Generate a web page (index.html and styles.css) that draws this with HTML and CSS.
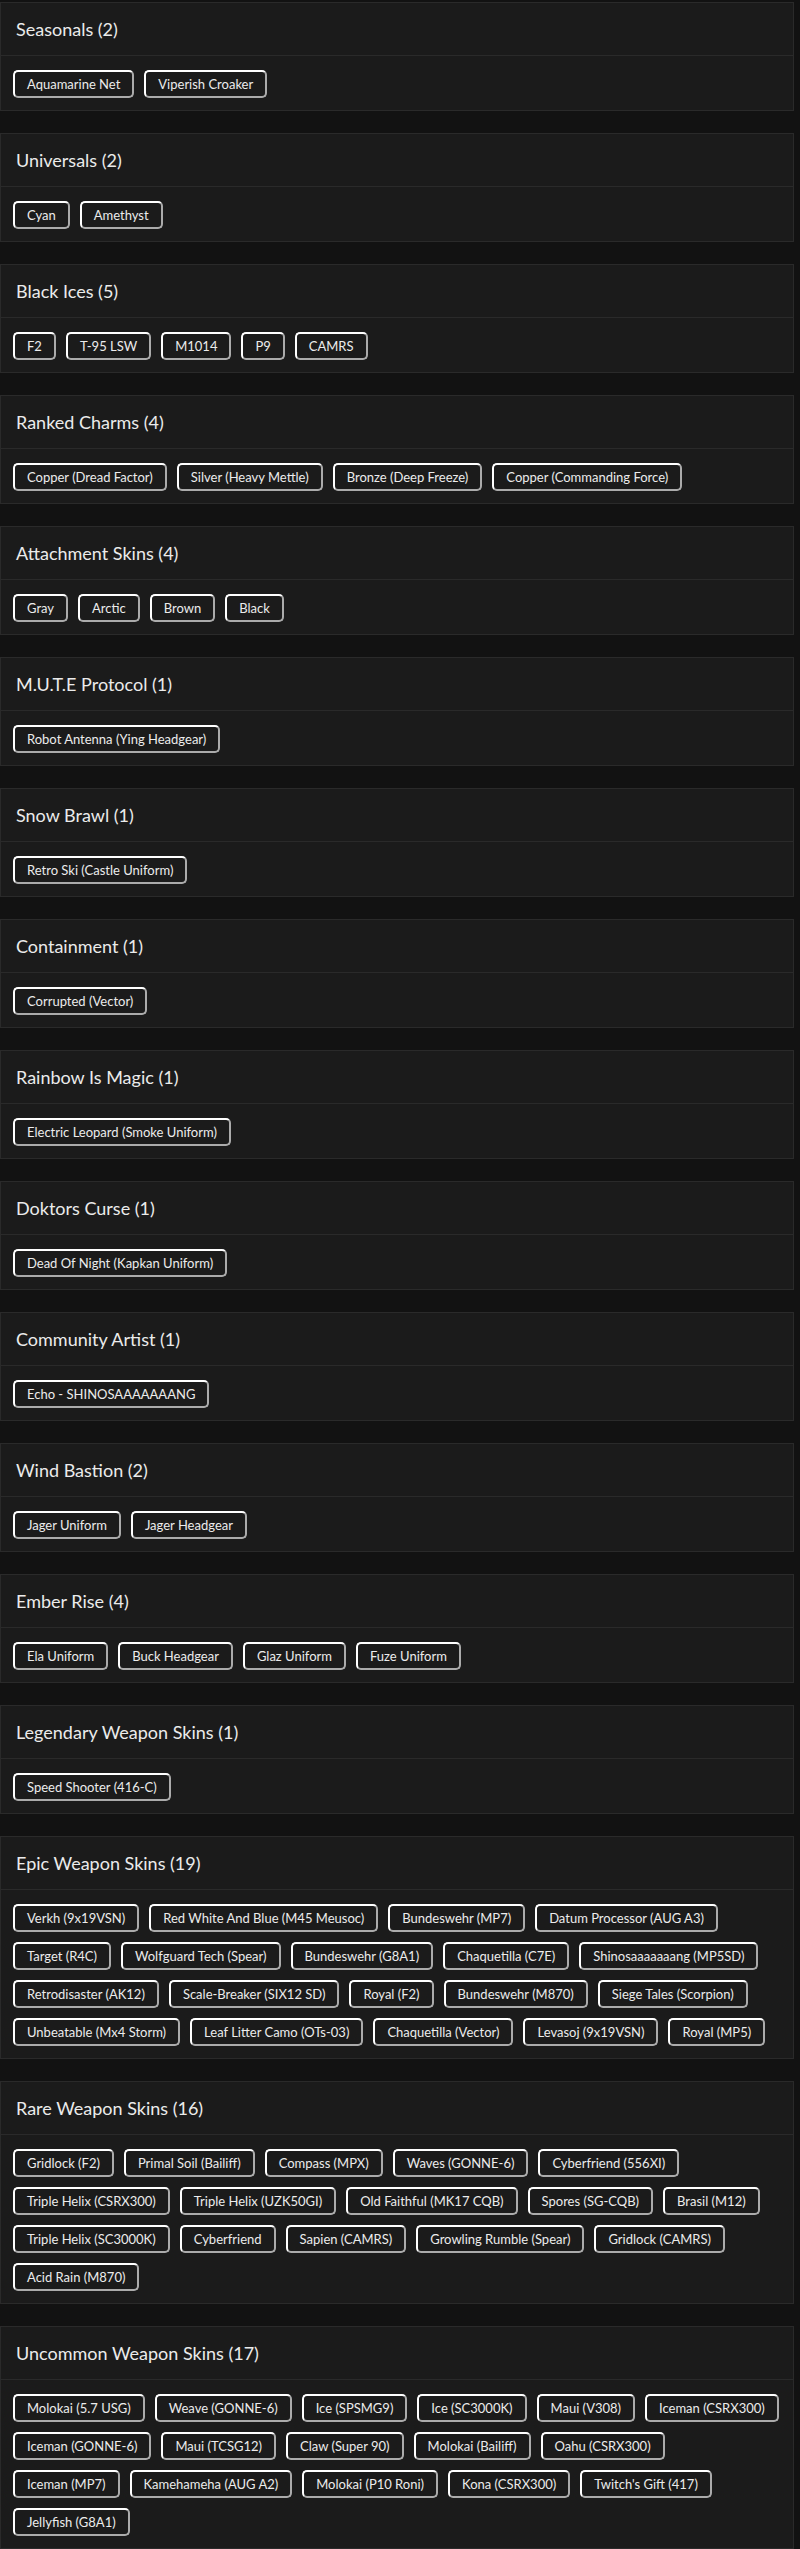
FILE: index.html
```html
<!DOCTYPE html>
<html lang="en">
<head>
<meta charset="utf-8">
<title>Inventory</title>
<link rel="stylesheet" href="styles.css">
</head>
<body>
<main class="page">
  <section class="card">
    <h2 class="card-header">Seasonals (2)</h2>
    <div class="card-body">
      <div class="chip-row">
        <button class="chip">Aquamarine Net</button>
        <button class="chip">Viperish Croaker</button>
      </div>
    </div>
  </section>
  <section class="card">
    <h2 class="card-header">Universals (2)</h2>
    <div class="card-body">
      <div class="chip-row">
        <button class="chip">Cyan</button>
        <button class="chip">Amethyst</button>
      </div>
    </div>
  </section>
  <section class="card">
    <h2 class="card-header">Black Ices (5)</h2>
    <div class="card-body">
      <div class="chip-row">
        <button class="chip">F2</button>
        <button class="chip">T-95 LSW</button>
        <button class="chip">M1014</button>
        <button class="chip">P9</button>
        <button class="chip">CAMRS</button>
      </div>
    </div>
  </section>
  <section class="card">
    <h2 class="card-header">Ranked Charms (4)</h2>
    <div class="card-body">
      <div class="chip-row">
        <button class="chip">Copper (Dread Factor)</button>
        <button class="chip">Silver (Heavy Mettle)</button>
        <button class="chip">Bronze (Deep Freeze)</button>
        <button class="chip">Copper (Commanding Force)</button>
      </div>
    </div>
  </section>
  <section class="card">
    <h2 class="card-header">Attachment Skins (4)</h2>
    <div class="card-body">
      <div class="chip-row">
        <button class="chip">Gray</button>
        <button class="chip">Arctic</button>
        <button class="chip">Brown</button>
        <button class="chip">Black</button>
      </div>
    </div>
  </section>
  <section class="card">
    <h2 class="card-header">M.U.T.E Protocol (1)</h2>
    <div class="card-body">
      <div class="chip-row">
        <button class="chip">Robot Antenna (Ying Headgear)</button>
      </div>
    </div>
  </section>
  <section class="card">
    <h2 class="card-header">Snow Brawl (1)</h2>
    <div class="card-body">
      <div class="chip-row">
        <button class="chip">Retro Ski (Castle Uniform)</button>
      </div>
    </div>
  </section>
  <section class="card">
    <h2 class="card-header">Containment (1)</h2>
    <div class="card-body">
      <div class="chip-row">
        <button class="chip">Corrupted (Vector)</button>
      </div>
    </div>
  </section>
  <section class="card">
    <h2 class="card-header">Rainbow Is Magic (1)</h2>
    <div class="card-body">
      <div class="chip-row">
        <button class="chip">Electric Leopard (Smoke Uniform)</button>
      </div>
    </div>
  </section>
  <section class="card">
    <h2 class="card-header">Doktors Curse (1)</h2>
    <div class="card-body">
      <div class="chip-row">
        <button class="chip">Dead Of Night (Kapkan Uniform)</button>
      </div>
    </div>
  </section>
  <section class="card">
    <h2 class="card-header">Community Artist (1)</h2>
    <div class="card-body">
      <div class="chip-row">
        <button class="chip">Echo - SHINOSAAAAAAANG</button>
      </div>
    </div>
  </section>
  <section class="card">
    <h2 class="card-header">Wind Bastion (2)</h2>
    <div class="card-body">
      <div class="chip-row">
        <button class="chip">Jager Uniform</button>
        <button class="chip">Jager Headgear</button>
      </div>
    </div>
  </section>
  <section class="card">
    <h2 class="card-header">Ember Rise (4)</h2>
    <div class="card-body">
      <div class="chip-row">
        <button class="chip">Ela Uniform</button>
        <button class="chip">Buck Headgear</button>
        <button class="chip">Glaz Uniform</button>
        <button class="chip">Fuze Uniform</button>
      </div>
    </div>
  </section>
  <section class="card">
    <h2 class="card-header">Legendary Weapon Skins (1)</h2>
    <div class="card-body">
      <div class="chip-row">
        <button class="chip">Speed Shooter (416-C)</button>
      </div>
    </div>
  </section>
  <section class="card">
    <h2 class="card-header">Epic Weapon Skins (19)</h2>
    <div class="card-body">
      <div class="chip-row">
        <button class="chip">Verkh (9x19VSN)</button>
        <button class="chip">Red White And Blue (M45 Meusoc)</button>
        <button class="chip">Bundeswehr (MP7)</button>
        <button class="chip">Datum Processor (AUG A3)</button>
      </div>
      <div class="chip-row">
        <button class="chip">Target (R4C)</button>
        <button class="chip">Wolfguard Tech (Spear)</button>
        <button class="chip">Bundeswehr (G8A1)</button>
        <button class="chip">Chaquetilla (C7E)</button>
        <button class="chip">Shinosaaaaaaang (MP5SD)</button>
      </div>
      <div class="chip-row">
        <button class="chip">Retrodisaster (AK12)</button>
        <button class="chip">Scale-Breaker (SIX12 SD)</button>
        <button class="chip">Royal (F2)</button>
        <button class="chip">Bundeswehr (M870)</button>
        <button class="chip">Siege Tales (Scorpion)</button>
      </div>
      <div class="chip-row">
        <button class="chip">Unbeatable (Mx4 Storm)</button>
        <button class="chip">Leaf Litter Camo (OTs-03)</button>
        <button class="chip">Chaquetilla (Vector)</button>
        <button class="chip">Levasoj (9x19VSN)</button>
        <button class="chip">Royal (MP5)</button>
      </div>
    </div>
  </section>
  <section class="card">
    <h2 class="card-header">Rare Weapon Skins (16)</h2>
    <div class="card-body">
      <div class="chip-row">
        <button class="chip">Gridlock (F2)</button>
        <button class="chip">Primal Soil (Bailiff)</button>
        <button class="chip">Compass (MPX)</button>
        <button class="chip">Waves (GONNE-6)</button>
        <button class="chip">Cyberfriend (556XI)</button>
      </div>
      <div class="chip-row">
        <button class="chip">Triple Helix (CSRX300)</button>
        <button class="chip">Triple Helix (UZK50GI)</button>
        <button class="chip">Old Faithful (MK17 CQB)</button>
        <button class="chip">Spores (SG-CQB)</button>
        <button class="chip">Brasil (M12)</button>
      </div>
      <div class="chip-row">
        <button class="chip">Triple Helix (SC3000K)</button>
        <button class="chip">Cyberfriend</button>
        <button class="chip">Sapien (CAMRS)</button>
        <button class="chip">Growling Rumble (Spear)</button>
        <button class="chip">Gridlock (CAMRS)</button>
      </div>
      <div class="chip-row">
        <button class="chip">Acid Rain (M870)</button>
      </div>
    </div>
  </section>
  <section class="card">
    <h2 class="card-header">Uncommon Weapon Skins (17)</h2>
    <div class="card-body">
      <div class="chip-row">
        <button class="chip">Molokai (5.7 USG)</button>
        <button class="chip">Weave (GONNE-6)</button>
        <button class="chip">Ice (SPSMG9)</button>
        <button class="chip">Ice (SC3000K)</button>
        <button class="chip">Maui (V308)</button>
        <button class="chip">Iceman (CSRX300)</button>
      </div>
      <div class="chip-row">
        <button class="chip">Iceman (GONNE-6)</button>
        <button class="chip">Maui (TCSG12)</button>
        <button class="chip">Claw (Super 90)</button>
        <button class="chip">Molokai (Bailiff)</button>
        <button class="chip">Oahu (CSRX300)</button>
      </div>
      <div class="chip-row">
        <button class="chip">Iceman (MP7)</button>
        <button class="chip">Kamehameha (AUG A2)</button>
        <button class="chip">Molokai (P10 Roni)</button>
        <button class="chip">Kona (CSRX300)</button>
        <button class="chip">Twitch's Gift (417)</button>
      </div>
      <div class="chip-row">
        <button class="chip">Jellyfish (G8A1)</button>
      </div>
    </div>
  </section>
</main>
</body>
</html>
```
FILE: styles.css
```css
html, body {
  margin: 0;
  padding: 0;
  background: #121212;
}

body {
  font-family: "Lato", "Open Sans", "Liberation Sans", sans-serif;
  color: #e6e6e6;
}

.page {
  padding: 2px 6px 0 0;
}

.card {
  background: #1b1b1b;
  border: 1px solid #2a2a2a;
  margin-bottom: 22px;
}

.card:last-child {
  margin-bottom: 0;
}

.card-header {
  margin: 0;
  height: 52px;
  padding: 0 15px;
  display: flex;
  align-items: center;
  font-size: 18px;
  font-weight: 400;
  color: #ebebeb;
  border-bottom: 1px solid #2a2a2a;
}

.card-body {
  padding: 9px 7px 7px;
}

.chip-row {
  display: flex;
}

.chip {
  flex: none;
  margin: 5px;
  height: 28px;
  box-sizing: border-box;
  padding: 0 12px;
  border: 2px outset #ffffff;
  border-radius: 5px;
  background: #1b1b1b;
  color: #ececec;
  font-family: "Lato", "Open Sans", "Liberation Sans", sans-serif;
  font-size: 13px;
  line-height: 24px;
  white-space: nowrap;
}
```
